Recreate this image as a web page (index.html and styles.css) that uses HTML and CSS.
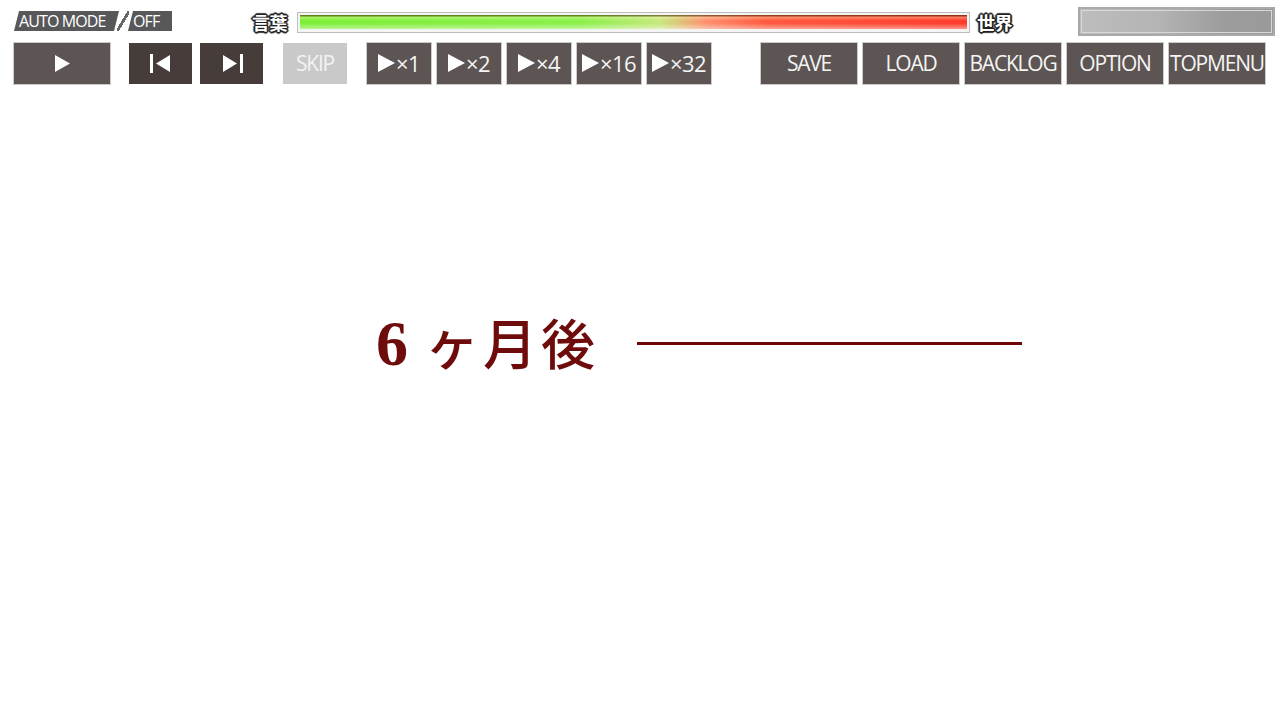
FILE: index.html
```html
<!DOCTYPE html>
<html lang="ja">
<head>
<meta charset="utf-8">
<title>Game</title>
<link rel="stylesheet" href="styles.css">
</head>
<body>
<header class="hud">
  <div class="row-top">
    <div class="mode">
      <span class="mode-auto">AUTO MODE</span>
      <span class="mode-slash"></span>
      <span class="mode-off">OFF</span>
    </div>
    <span class="tag tag-left">言葉</span>
    <div class="meter"><div class="meter-fill"></div></div>
    <span class="tag tag-right">世界</span>
    <div class="gauge"></div>
  </div>
  <div class="row-btns">
    <button class="btn btn-play"><svg width="16" height="17" viewBox="0 0 16 17"><path d="M1 0 L16 8.5 L1 17 Z" fill="#fff"/></svg></button>
    <button class="btn btn-dark btn-prev"><svg width="22" height="19" viewBox="0 0 22 19"><rect x="0" y="0" width="3" height="19" fill="#fff"/><path d="M6 9.5 L20 1 L20 18 Z" fill="#fff"/></svg></button>
    <button class="btn btn-dark btn-next"><svg width="22" height="19" viewBox="0 0 22 19"><path d="M2 1 L16 9.5 L2 18 Z" fill="#fff"/><rect x="19" y="0" width="3" height="19" fill="#fff"/></svg></button>
    <button class="btn btn-skip">SKIP</button>
    <div class="speeds">
      <button class="btn btn-speed"><svg class="tri" width="17" height="18" viewBox="0 0 17 18"><path d="M0 0 L17 9 L0 18 Z" fill="#fff"/></svg>×1</button>
      <button class="btn btn-speed"><svg class="tri" width="17" height="18" viewBox="0 0 17 18"><path d="M0 0 L17 9 L0 18 Z" fill="#fff"/></svg>×2</button>
      <button class="btn btn-speed"><svg class="tri" width="17" height="18" viewBox="0 0 17 18"><path d="M0 0 L17 9 L0 18 Z" fill="#fff"/></svg>×4</button>
      <button class="btn btn-speed"><svg class="tri" width="17" height="18" viewBox="0 0 17 18"><path d="M0 0 L17 9 L0 18 Z" fill="#fff"/></svg>×16</button>
      <button class="btn btn-speed"><svg class="tri" width="17" height="18" viewBox="0 0 17 18"><path d="M0 0 L17 9 L0 18 Z" fill="#fff"/></svg>×32</button>
    </div>
    <div class="menu">
      <button class="btn btn-menu">SAVE</button>
      <button class="btn btn-menu">LOAD</button>
      <button class="btn btn-menu">BACKLOG</button>
      <button class="btn btn-menu">OPTION</button>
      <button class="btn btn-menu">TOPMENU</button>
    </div>
  </div>
</header>
<main class="stage">
  <div class="caption">
    <h1 class="caption-text"><span class="num">6</span><span class="kana">ヶ月後</span></h1>
    <span class="caption-line"></span>
  </div>
</main>
</body>
</html>
```
FILE: styles.css
```css
html, body {
  margin: 0;
  padding: 0;
  background: #ffffff;
}
body {
  width: 1280px;
  height: 720px;
  overflow: hidden;
  font-family: "Open Sans", "Noto Sans CJK JP", sans-serif;
}
.hud {
  display: flex;
  flex-direction: column;
}
.row-top {
  display: flex;
  align-items: center;
  height: 29px;
  padding: 7px 0 0 14px;
}
.mode {
  display: flex;
  align-items: center;
  height: 20px;
  width: 158px;
  margin-top: -1px;
}
.mode-auto {
  display: flex;
  align-items: center;
  height: 20px;
  width: 105px;
  padding-left: 5px;
  box-sizing: border-box;
  background: #58585a;
  color: #fff;
  font-size: 16px;
  letter-spacing: -0.9px;
  white-space: nowrap;
  clip-path: polygon(5px 0, 100% 0, calc(100% - 5px) 100%, 0 100%);
}
.mode-slash {
  width: 12px;
  height: 20px;
  background: linear-gradient(to bottom right, transparent 44%, #666 44%, #666 58%, transparent 58%);
  margin-left: -2px;
}
.mode-off {
  display: flex;
  align-items: center;
  height: 20px;
  width: 44px;
  padding-left: 5px;
  box-sizing: border-box;
  background: #58585a;
  color: #fff;
  font-size: 16px;
  letter-spacing: -0.9px;
  clip-path: polygon(5px 0, 100% 0, 100% 100%, 0 100%);
  margin-left: -1px;
}
.tag {
  font-family: "Noto Sans CJK JP", sans-serif;
  font-weight: 700;
  font-size: 18px;
  line-height: 20px;
  color: #fff;
  letter-spacing: -0.5px;
  text-shadow:
    1px 0 0 #222, -1px 0 0 #222, 0 1px 0 #222, 0 -1px 0 #222,
    1px 1px 0 #222, -1px -1px 0 #222, 1px -1px 0 #222, -1px 1px 0 #222,
    2px 0 1px #333, -2px 0 1px #333, 0 2px 1px #333, 0 -2px 1px #333;
}
.tag-left {
  margin-left: 80px;
  width: 39px;
}
.tag-right {
  width: 39px;
}
.meter {
  width: 673px;
  height: 21px;
  margin: 1px 7px 0 6px;
  box-sizing: border-box;
  border: 1px solid #bdbdbd;
  background: #f4f4f4;
  padding: 2px 2px 3px 2px;
}
.meter-fill {
  width: 100%;
  height: 100%;
  background:
    linear-gradient(to bottom, rgba(60,40,0,0.55) 0, rgba(60,40,0,0.55) 1px, rgba(255,255,200,0.35) 2px, rgba(255,255,255,0) 40%, rgba(255,255,255,0) 60%, rgba(255,255,255,0.45) 100%),
    linear-gradient(to right, #7fee38 0%, #8cf04c 42%, #c8e880 54%, #ff9070 61%, #ff5a40 70%, #ff3c2c 100%);
}
.gauge {
  margin-left: 62px;
  width: 197px;
  height: 29px;
  box-sizing: border-box;
  border: 2px solid #a9a9a9;
  outline: 1px solid #d8d8d8;
  outline-offset: -4px;
  background: linear-gradient(to right, #bdbdbd 0%, #b4b4b4 40%, #9c9c9c 75%, #9a9a9a 100%);
}
.row-btns {
  display: flex;
  align-items: center;
  height: 44px;
  margin-top: 5px;
  padding-left: 13px;
}
.btn {
  display: flex;
  align-items: center;
  justify-content: center;
  box-sizing: border-box;
  margin: 0;
  padding: 0;
  height: 43px;
  border: 1px solid #cfcaca;
  background: #5d5553;
  color: #f4f4f4;
  font-family: "Open Sans", sans-serif;
  font-size: 21px;
  letter-spacing: -1.2px;
  white-space: nowrap;
  cursor: pointer;
}
.btn-play {
  width: 98px;
}
.btn-dark {
  width: 63px;
  height: 41px;
  border: none;
  background: #463c39;
}
.btn-prev {
  margin-left: 18px;
}
.btn-next {
  margin-left: 8px;
}
.btn-skip {
  margin-left: 20px;
  width: 64px;
  height: 41px;
  border: none;
  background: #c9c9c9;
  color: #f2f2f2;
}
.speeds {
  display: flex;
  gap: 4px;
  margin-left: 19px;
}
.btn-speed {
  width: 66px;
  gap: 0;
  font-size: 22px;
  letter-spacing: -0.5px;
}
.tri {
  margin-right: 1px;
}
.menu {
  display: flex;
  gap: 4px;
  margin-left: 48px;
}
.btn-menu {
  width: 98px;
}
.stage {
  display: flex;
  justify-content: flex-start;
  padding: 222px 0 0 376px;
}
.caption {
  display: flex;
  align-items: center;
  gap: 38px;
}
.caption-text {
  margin: 0;
  display: flex;
  align-items: baseline;
  font-family: "Liberation Serif", "Noto Sans CJK JP", serif;
  font-weight: 700;
  font-size: 64px;
  line-height: 70px;
  color: #6e0b0b;
}
.caption-text .num {
  margin-right: 17px;
}
.caption-text .kana {
  font-family: "Noto Sans CJK JP", sans-serif;
  font-weight: 500;
  font-size: 54px;
  letter-spacing: 4px;
}
.caption-line {
  width: 385px;
  height: 3px;
  background: #6e0606;
  margin-top: 0;
}
```
